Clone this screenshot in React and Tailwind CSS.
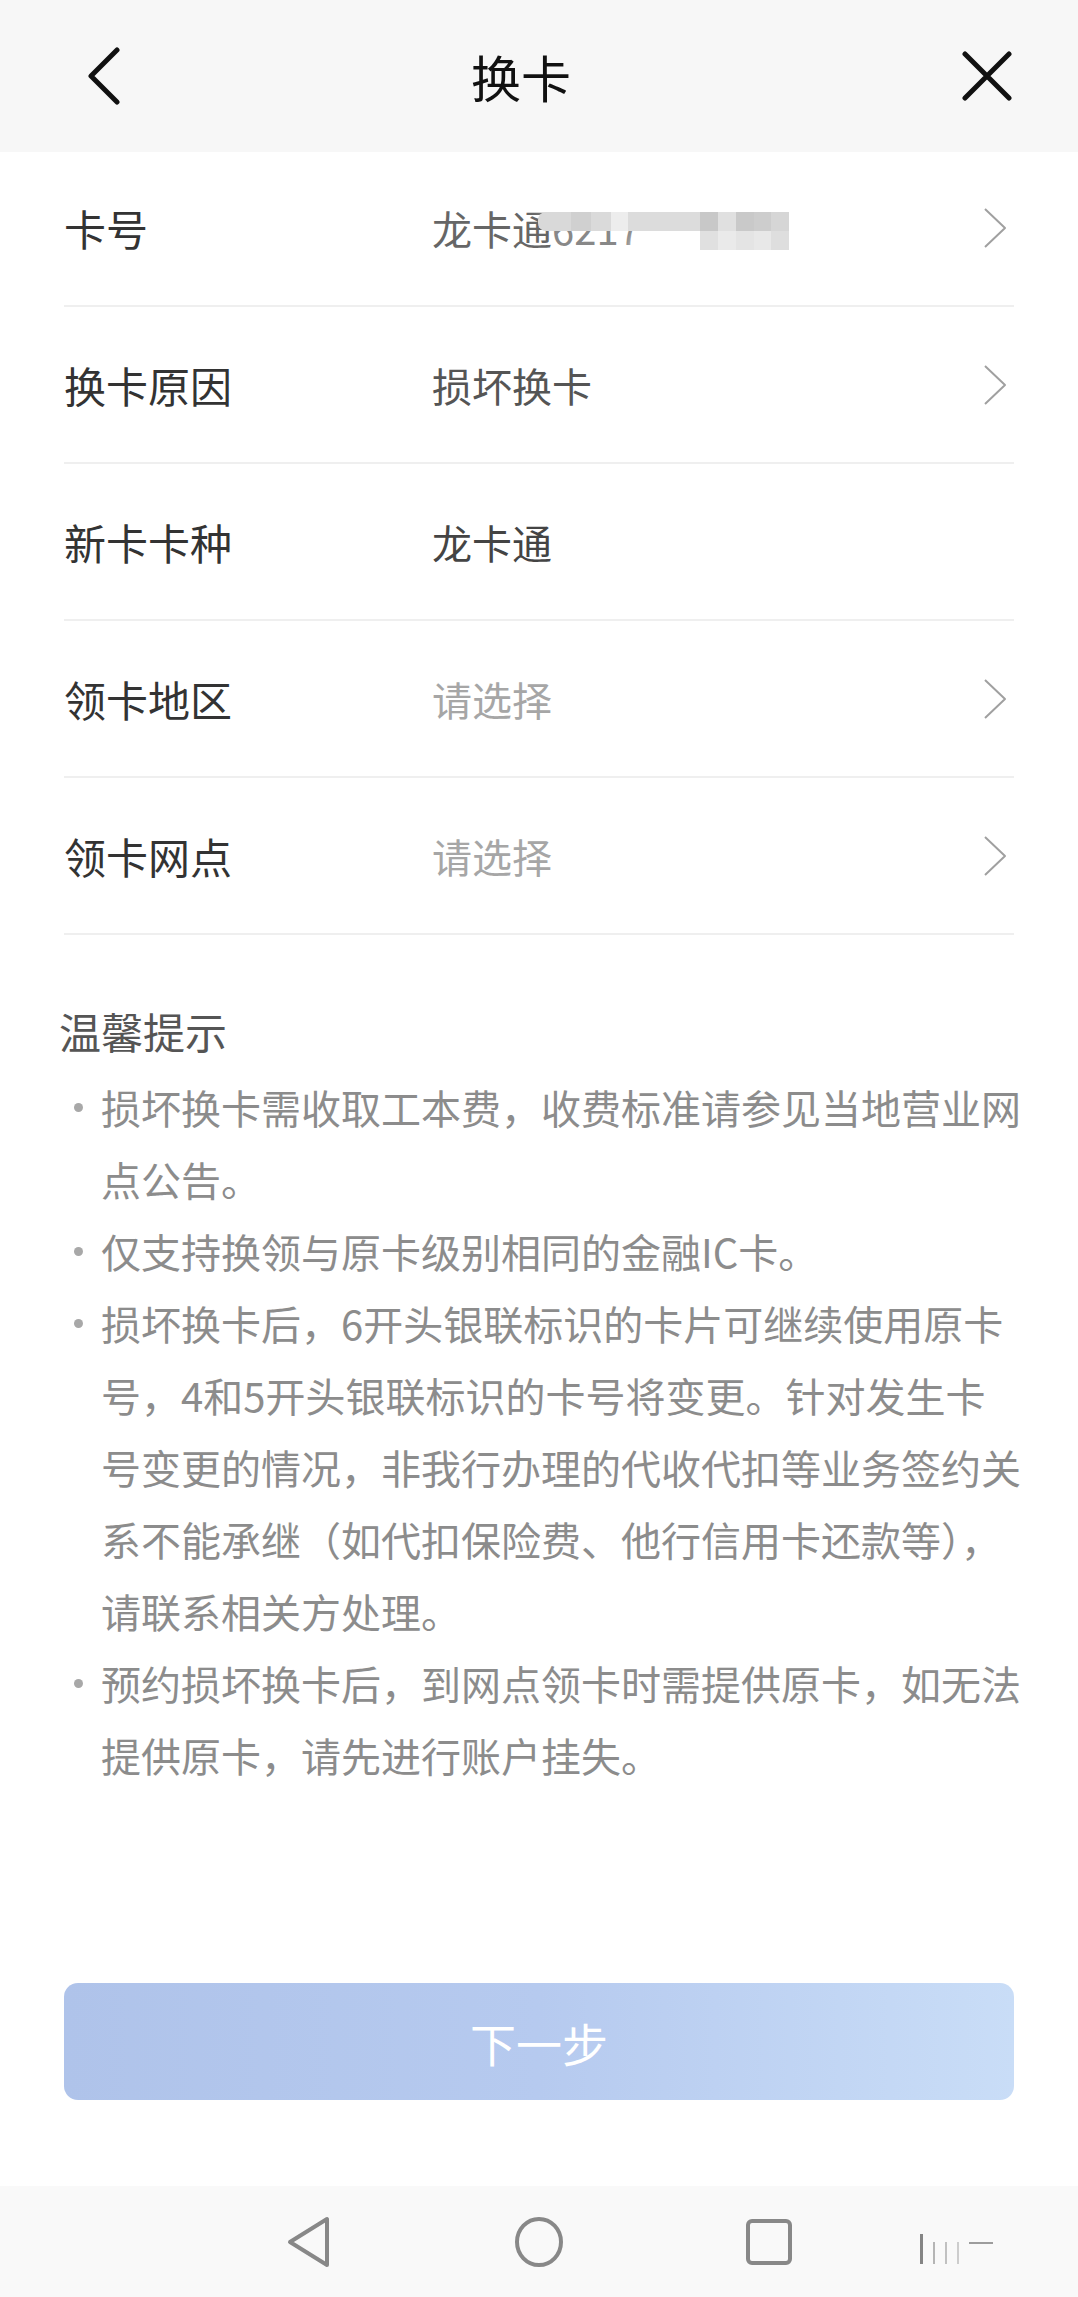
import React from "react";

const font = "font-['Noto_Sans_CJK_SC','Noto_Sans',sans-serif]";

function Chevron() {
  return (
    <svg width="30" height="42" viewBox="0 0 30 42" fill="none" className="shrink-0 mr-[4px]">
      <path d="M5 2 L25 21 L5 40" stroke="#a0a0a0" strokeWidth="2" strokeLinejoin="round" />
    </svg>
  );
}

function CardMask() {
  const top = [
    ["w-[33px]", "bg-[#d9d9d9]"],
    ["w-[20px]", "bg-[#d0d0d0]"],
    ["w-[20px]", "bg-[#dadada]"],
    ["w-[17px]", "bg-[#ededed]"],
    ["w-[72px]", "bg-[#dcdcdc]"],
    ["w-[18px]", "bg-[#c8c8c8]"],
    ["w-[18px]", "bg-[#e0e0e0]"],
    ["w-[18px]", "bg-[#c9c9c9]"],
    ["w-[17px]", "bg-[#cdcdcd]"],
    ["w-[18px]", "bg-[#d6d6d6]"],
  ];
  const bottom = [
    ["w-[18px]", "bg-[#e0e0e0]"],
    ["w-[18px]", "bg-[#eaeaea]"],
    ["w-[18px]", "bg-[#e4e4e4]"],
    ["w-[17px]", "bg-[#e8e8e8]"],
    ["w-[18px]", "bg-[#dedede]"],
  ];
  return (
    <span className="relative inline-flex items-center">
      <span className="text-[#888]">6217</span>
      <span className="absolute left-[80px] top-[22px] w-[90px] h-[34px] rounded-full bg-white blur-[5px]" />
      <span className="absolute left-[-14px] top-[-18px] w-[110px] h-[24px] rounded-full bg-white/50 blur-[5px]" />
      <span className="absolute left-[-14px] top-[4px] flex flex-col">
        <span className="flex h-[19px]">
          {top.map(([w, c], i) => (
            <span key={i} className={`${w} ${c} h-full block ${i === 0 ? "rounded-l-[8px]" : ""}`} />
          ))}
        </span>
        <span className="flex h-[19px] pl-[162px]">
          {bottom.map(([w, c], i) => (
            <span key={i} className={`${w} ${c} h-full block`} />
          ))}
        </span>
      </span>
    </span>
  );
}

function Row({ label, children, arrow = true }) {
  return (
    <div className="h-[157px] border-b-2 border-[#efefef] flex items-center">
      <div className="w-[368px] text-[42px] text-[#333] leading-none">{label}</div>
      <div className="flex-1 text-[40px] leading-none flex items-center">{children}</div>
      {arrow && <Chevron />}
    </div>
  );
}

const tips = [
  ["损坏换卡需收取工本费，收费标准请参见当地营业网", "点公告。"],
  ["仅支持换领与原卡级别相同的金融IC卡。"],
  [
    "损坏换卡后，6开头银联标识的卡片可继续使用原卡",
    "号，4和5开头银联标识的卡号将变更。针对发生卡",
    "号变更的情况，非我行办理的代收代扣等业务签约关",
    "系不能承继（如代扣保险费、他行信用卡还款等），",
    "请联系相关方处理。",
  ],
  ["预约损坏换卡后，到网点领卡时需提供原卡，如无法", "提供原卡，请先进行账户挂失。"],
];

export default function App() {
  return (
    <div className={`w-[1078px] h-[2297px] bg-white flex flex-col overflow-hidden ${font}`}>
      {/* top bar */}
      <div className="h-[152px] bg-[#f7f7f7] flex items-center pl-[86px] pr-[66px] shrink-0">
        <svg width="36" height="58" viewBox="0 0 36 58" fill="none">
          <path d="M31 3 L5 29 L31 55" stroke="#111" strokeWidth="5" strokeLinecap="round" strokeLinejoin="round" />
        </svg>
        <div className="flex-1 text-center text-[50px] text-[#111] pr-[42px] leading-none">换卡</div>
        <svg width="50" height="50" viewBox="0 0 50 50" fill="none">
          <path d="M3 3 L47 47 M47 3 L3 47" stroke="#111" strokeWidth="5" strokeLinecap="round" />
        </svg>
      </div>

      {/* form rows */}
      <div className="px-[64px] -mt-[2px]">
        <Row label="卡号">
          <span className="text-[#666]">龙卡通</span>
          <CardMask />
        </Row>
        <Row label="换卡原因">
          <span className="text-[#555]">损坏换卡</span>
        </Row>
        <Row label="新卡卡种" arrow={false}>
          <span className="text-[#444]">龙卡通</span>
        </Row>
        <Row label="领卡地区">
          <span className="text-[#a6a6a6]">请选择</span>
        </Row>
        <Row label="领卡网点">
          <span className="text-[#a6a6a6]">请选择</span>
        </Row>
      </div>

      {/* tips */}
      <div className="pl-[59px] mt-[66px]">
        <div className="text-[42px] leading-[60px] text-[#555]">温馨提示</div>
        <div className="mt-[10px] flex flex-col">
          {tips.map((lines, i) => (
            <div key={i} className="flex">
              <div className="w-[42px] h-[72px] flex items-center pl-[15px] shrink-0">
                <span className="w-[9px] h-[9px] rounded-full bg-[#a8a8a8] block" />
              </div>
              <div className="text-[40px] leading-[72px] text-[#8c8c8c] whitespace-nowrap">
                {lines.map((l, j) => (
                  <div key={j}>{l}</div>
                ))}
              </div>
            </div>
          ))}
        </div>
      </div>

      {/* next button */}
      <div className="px-[64px] mt-[192px]">
        <div className="h-[117px] rounded-[14px] bg-gradient-to-r from-[#afc3ea] via-[#b6caef] to-[#c9ddf7] flex items-center justify-center">
          <span className="text-white text-[46px] leading-none">下一步</span>
        </div>
      </div>

      {/* system nav bar */}
      <div className="mt-auto h-[111px] bg-[#f9f9f9] flex items-center justify-center relative">
        <div className="flex items-center gap-[181px]">
          <svg width="48" height="52" viewBox="0 0 48 52" fill="none">
            <path d="M42 3 L42 49 L5 26 Z" stroke="#888" strokeWidth="4" strokeLinejoin="round" />
          </svg>
          <svg width="50" height="52" viewBox="0 0 50 52" fill="none">
            <ellipse cx="25" cy="26" rx="22" ry="23" stroke="#888" strokeWidth="4" />
          </svg>
          <svg width="48" height="48" viewBox="0 0 48 48" fill="none">
            <rect x="3" y="3" width="42" height="42" rx="4" stroke="#888" strokeWidth="4" />
          </svg>
        </div>
        <div className="absolute left-[920px] top-[48px] flex items-end gap-[10px] opacity-70">
          <span className="w-[3px] h-[30px] bg-[#555] block" />
          <span className="w-[2px] h-[22px] bg-[#999] block" />
          <span className="w-[2px] h-[22px] bg-[#aaa] block" />
          <span className="w-[2px] h-[22px] bg-[#bbb] block" />
          <span className="w-[24px] h-[2px] bg-[#777] block mb-[20px]" />
        </div>
      </div>
    </div>
  );
}
